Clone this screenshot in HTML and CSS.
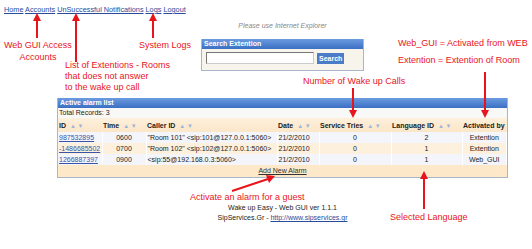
FILE: index.html
```html
<!DOCTYPE html>
<html lang="en">
<head>
  <meta charset="UTF-8">
  <title>Wake up Easy - Web GUI</title>
  <link rel="stylesheet" href="styles.css">
</head>
<body>
  <div class="nav">
    <a href="#">Home</a> <a href="#">Accounts</a> <a href="#">UnSuccessful Notifications</a> <a href="#">Logs</a> <a href="#">Logout</a>
  </div>

  <div class="main">
    <p class="notice">Please use Internet Explorer</p>

    <!-- search -->
    <div class="search">
      <div class="bar">Search Extention</div>
      <div class="search-body">
        <input type="text" class="search-input">
        <button class="search-btn">Search</button>
      </div>
    </div>

    <!-- alarm list -->
    <div class="panel">
      <div class="bar">Active alarm list</div>
      <div class="total">Total Records: 3</div>
      <table class="alarms">
        <colgroup>
          <col style="width:44px"><col style="width:44px"><col style="width:131px"><col style="width:42px"><col style="width:72px"><col style="width:71px"><col>
        </colgroup>
        <thead>
          <tr>
            <th>ID <span class="sort">▲ ▼</span></th>
            <th>Time <span class="sort">▲ ▼</span></th>
            <th>Caller ID <span class="sort">▲ ▼</span></th>
            <th>Date <span class="sort">▲ ▼</span></th>
            <th>Service Tries <span class="sort">▲ ▼</span></th>
            <th>Language ID <span class="sort">▲ ▼</span></th>
            <th>Activated by</th>
          </tr>
        </thead>
        <tbody>
          <tr class="odd">
            <td><a href="#">987532895</a></td><td class="c">0600</td><td>"Room 101" &lt;sip:101@127.0.0.1:5060&gt;</td><td>21/2/2010</td><td class="c">0</td><td class="c">2</td><td class="c">Extention</td>
          </tr>
          <tr class="even">
            <td><a href="#">-1486685502</a></td><td class="c">0700</td><td>"Room 102" &lt;sip:102@127.0.0.1:5060&gt;</td><td>21/2/2010</td><td class="c">0</td><td class="c">1</td><td class="c">Extention</td>
          </tr>
          <tr class="odd">
            <td><a href="#">1266887397</a></td><td class="c">0900</td><td>&lt;sip:55@192.168.0.3:5060&gt;</td><td>21/2/2010</td><td class="c">0</td><td class="c">1</td><td class="c">Web_GUI</td>
          </tr>
        </tbody>
      </table>
      <div class="add"><a href="#">Add New Alarm</a></div>
    </div>

    <div class="footer">
      <p>Wake up Easy - Web GUI ver 1.1.1</p>
      <p>SipServices.Gr - <a href="#">http://www.sipservices.gr</a></p>
    </div>
  </div>

  <!-- annotations -->
  <div class="note n-access">Web GUI Access<br>Accounts</div>
  <div class="note n-ext">List of Extentions - Rooms<br>that does not answer<br>to the wake up call</div>
  <div class="note n-logs">System Logs</div>
  <div class="note n-web">Web_GUI = Activated from WEB</div>
  <div class="note n-room">Extention = Extention of Room</div>
  <div class="note n-calls">Number of Wake up Calls</div>
  <div class="note n-alarm">Activate an alarm for a guest</div>
  <div class="note n-lang">Selected Language</div>

  <svg class="arrows" width="532" height="249" viewBox="0 0 532 249">
    <g stroke="#e8141c" stroke-width="2" fill="none">
      <line x1="37" y1="38" x2="37" y2="20"/>
      <line x1="76" y1="62" x2="76" y2="20"/>
      <line x1="153" y1="38" x2="153" y2="20"/>
      <line x1="485" y1="72" x2="485" y2="111"/>
      <line x1="353" y1="88" x2="353" y2="111"/>
      <line x1="424" y1="209" x2="424" y2="178"/>
      <line x1="232" y1="191" x2="268" y2="179"/>
    </g>
    <g fill="#e8141c">
      <polygon points="37,13 33,21 41,21"/>
      <polygon points="76,13 72,21 80,21"/>
      <polygon points="153,13 149,21 157,21"/>
      <polygon points="485,118 481,110 489,110"/>
      <polygon points="353,118 349,110 357,110"/>
      <polygon points="424,171 420,179 428,179"/>
      <polygon points="275,176 266,175 269,183"/>
    </g>
  </svg>
</body>
</html>
```
FILE: styles.css
```css
body {
  margin: 0;
  font-family: "Liberation Sans", Arial, sans-serif;
  font-size: 7px;
  color: #222;
  position: relative;
  width: 532px;
  height: 249px;
  overflow: hidden;
  background: #fff;
}
p {
  margin: 0;
}
a {
  color: #2a4a9a;
}
.nav {
  padding: 5px 0 0 4px;
  font-size: 7.3px;
  line-height: 9px;
}
.main {
  width: 451px;
  margin-left: 57px;
  text-align: center;
}
.notice {
  margin-top: 7px;
  font-style: italic;
  color: #888;
  font-size: 7px;
  line-height: 9px;
}
.bar {
  background: linear-gradient(#6b9be0, #3b6fc2);
  color: #fff;
  font-weight: bold;
  text-align: left;
  padding-left: 2px;
  height: 10px;
  line-height: 10px;
  font-size: 7px;
}
.search {
  width: 161px;
  margin: 9px auto 0;
  border: 1px solid #a9b6c8;
  border-top: none;
}
.search-body {
  background: #f7f4ec;
  display: flex;
  align-items: center;
  gap: 3px;
  padding: 3px 3px 6px 4px;
}
.search-input {
  width: 106px;
  height: 10px;
  padding: 0;
  border: 1px solid #777;
  border-right-color: #ccc;
  border-bottom-color: #ccc;
  background: #fff;
}
.search-btn {
  background: #4a7cc8;
  color: #fff;
  font-weight: bold;
  font-family: inherit;
  font-size: 7px;
  border: none;
  padding: 1px 2px;
  height: 11px;
  line-height: 9px;
}
.panel {
  margin-top: 27px;
  border: 1px solid #aab5c6;
  border-top: none;
  background: #faf7f0;
  text-align: left;
}
.total {
  height: 10px;
  line-height: 10px;
  padding-left: 1px;
  background: #f8f8f6;
}
.alarms {
  width: 100%;
  border-collapse: collapse;
  table-layout: fixed;
}
.alarms th {
  background: linear-gradient(#fdf0dc, #fbe6c8);
  font-weight: bold;
  height: 14px;
  padding: 0 1px;
  white-space: nowrap;
  text-align: left;
}
.sort {
  color: #9fb6d8;
  font-size: 6px;
  margin-left: 2px;
}
.alarms td {
  height: 11px;
  padding: 0 1px;
  white-space: nowrap;
  overflow: hidden;
  border-right: 1px solid #fff;
}
.alarms td.c {
  text-align: center;
}
.odd td {
  background: #f3f5fa;
}
.even td {
  background: #fdf1de;
}
.alarms td a {
  color: #3a55a8;
}
.add {
  background: #fde8ca;
  text-align: center;
  height: 12px;
  line-height: 11px;
}
.add a {
  color: #333;
}
.footer {
  margin-top: 25px;
  line-height: 10px;
  font-size: 7px;
}
.footer a {
  color: #2a4a9a;
}
.note {
  position: absolute;
  color: #e8141c;
  font-size: 9px;
  line-height: 11px;
  white-space: nowrap;
}
.n-access {
  left: 4px;
  top: 39px;
  text-align: center;
  line-height: 12px;
}
.n-ext {
  left: 65px;
  top: 60px;
}
.n-logs {
  left: 139px;
  top: 40px;
}
.n-web {
  left: 398px;
  top: 38px;
}
.n-room {
  left: 398px;
  top: 55px;
}
.n-calls {
  left: 303px;
  top: 76px;
}
.n-alarm {
  left: 190px;
  top: 192px;
}
.n-lang {
  left: 390px;
  top: 212px;
}
.arrows {
  position: absolute;
  left: 0;
  top: 0;
  pointer-events: none;
}
```
